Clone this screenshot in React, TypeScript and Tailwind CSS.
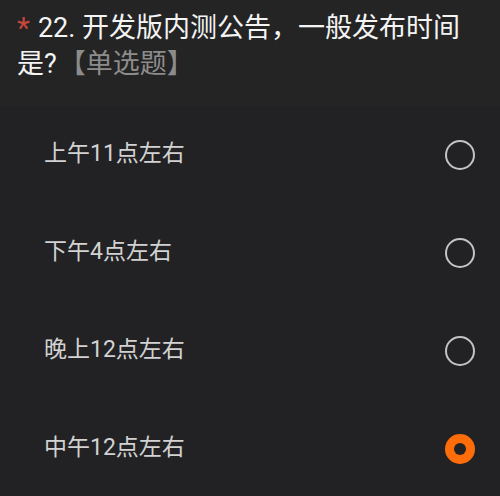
import { useState } from 'react';

const OPTIONS = ['上午11点左右', '下午4点左右', '晚上12点左右', '中午12点左右'];

const FONT = { fontFamily: 'Roboto, "Noto Sans CJK SC", sans-serif' };

export default function App() {
  const [selected, setSelected] = useState(3);

  return (
    <div className="w-[500px] h-[496px] overflow-hidden bg-[#222224]" style={FONT}>
      {/* 题目 */}
      <div className="bg-[#242424] pl-[17px] pr-4 pt-[10px] h-[106px] text-[27px] leading-[36px] text-[#f4f4f4]">
        <span className="inline-block align-top text-[30px] leading-[36px] text-[#c8463c] mr-[8px]">*</span>
        22. 开发版内测公告，一般发布时间是?
        <span className="ml-[2px] text-[#8c8c8c]">【单选题】</span>
      </div>

      {/* 选项 */}
      <div className="flex flex-col">
        {OPTIONS.map((opt, i) => (
          <button
            key={opt}
            onClick={() => setSelected(i)}
            className="flex h-[98px] items-center justify-between pl-[44px] pr-[25px] text-left"
          >
            <span className="text-[23px] leading-[30px] text-[#d2d2d2] -mt-[3px]">{opt}</span>
            {selected === i ? (
              <span className="flex h-[30px] w-[30px] items-center justify-center rounded-full bg-[#ff6d0a]">
                <span className="h-[12px] w-[12px] rounded-full bg-[#222224]" />
              </span>
            ) : (
              <span className="h-[30px] w-[30px] rounded-full border-2 border-[#c4c4c4]" />
            )}
          </button>
        ))}
      </div>
    </div>
  );
}
